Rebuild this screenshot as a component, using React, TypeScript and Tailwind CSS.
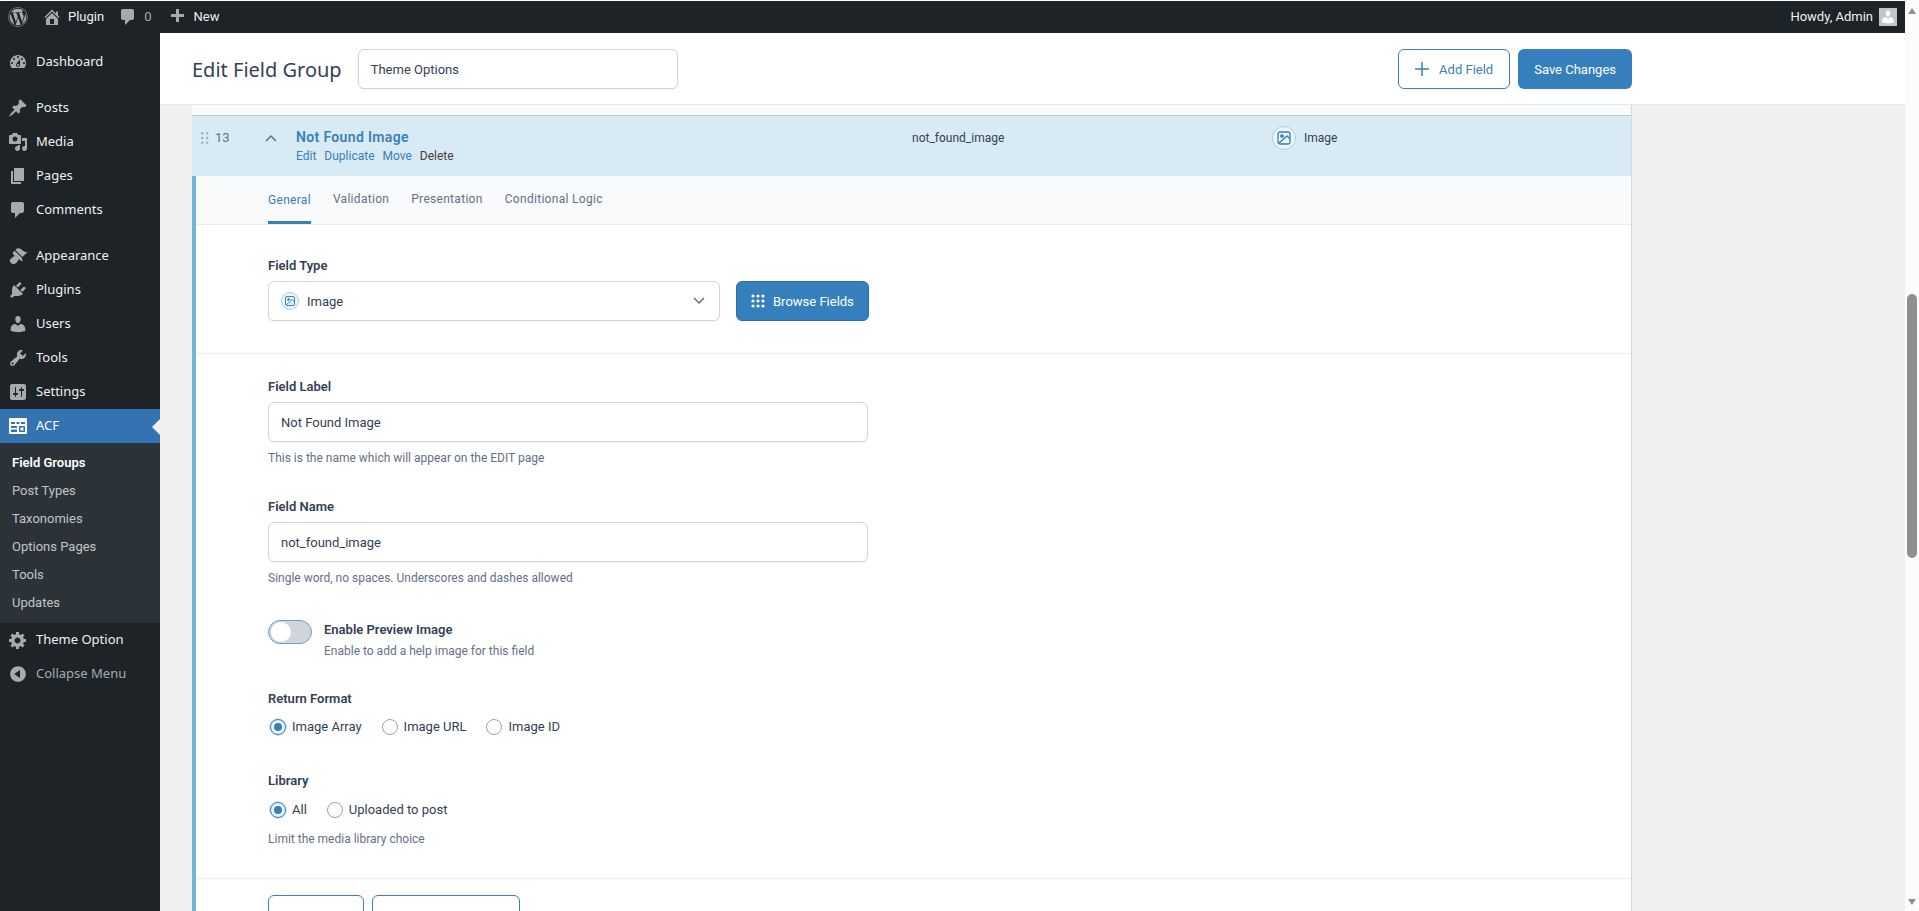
import { FaWordpress } from "react-icons/fa";

const P: Record<string, string> = {
  dashboard: "M3.76 16h12.48c1.1-1.37 1.76-3.11 1.76-5 0-4.42-3.58-8-8-8s-8 3.58-8 8c0 1.89.66 3.63 1.76 5zM10 4c.55 0 1 .45 1 1s-.45 1-1 1-1-.45-1-1 .45-1 1-1zM6 6c.55 0 1 .45 1 1s-.45 1-1 1-1-.45-1-1 .45-1 1-1zm8 0c.55 0 1 .45 1 1s-.45 1-1 1-1-.45-1-1 .45-1 1-1zm-5.37 5.55L12 7v6c0 1.1-.9 2-2 2s-2-.9-2-2c0-.57.24-1.08.63-1.45zM4 10c.55 0 1 .45 1 1s-.45 1-1 1-1-.45-1-1 .45-1 1-1zm12 0c.55 0 1 .45 1 1s-.45 1-1 1-1-.45-1-1 .45-1 1-1zm-5 3c0-.55-.45-1-1-1s-1 .45-1 1 .45 1 1 1 1-.45 1-1z",
  post: "M10.44 3.02l1.82-1.82 6.36 6.35-1.83 1.82c-1.05-.68-2.48-.57-3.41.36l-.75.75c-.92.93-1.04 2.35-.35 3.41l-1.83 1.82-2.41-2.41-2.8 2.79c-.42.42-3.38 2.71-3.8 2.29s1.86-3.39 2.28-3.81l2.79-2.79L4.1 9.36l1.83-1.82c1.05.69 2.48.57 3.4-.36l.75-.75c.93-.92 1.05-2.35.36-3.41z",
  media: "M13 11V4c0-.55-.45-1-1-1h-1.67L9 1H5L3.67 3H2c-.55 0-1 .45-1 1v7c0 .55.45 1 1 1h10c.55 0 1-.45 1-1zM7 4.5c1.38 0 2.5 1.12 2.5 2.5S8.38 9.5 7 9.5 4.5 8.38 4.5 7 5.62 4.5 7 4.5zM14 6h5v10.5c0 1.38-1.12 2.5-2.5 2.5S14 17.88 14 16.5s1.12-2.5 2.5-2.5c.17 0 .34.02.5.05V9h-3V6zm-4 8.05V13h2v3.5c0 1.38-1.12 2.5-2.5 2.5S7 17.88 7 16.5 8.12 14 9.5 14c.17 0 .34.02.5.05z",
  page: "M6 15V2h10v13H6zm-1 1h8v2H3V5h2v11z",
  comment: "M5 2h9c1.1 0 2 .9 2 2v7c0 1.1-.9 2-2 2h-2l-5 5v-5H5c-1.1 0-2-.9-2-2V4c0-1.1.9-2 2-2z",
  appearance: "M14.48 11.06L7.41 3.99l1.5-1.5c.5-.56 2.3-.47 3.51.32 1.21.8 1.43 1.28 2.91 2.1 1.18.64 2.45 1.26 4.45.85zm-.71.71L6.7 4.7 4.93 6.47c-.39.39-.39 1.02 0 1.41l1.06 1.06c.39.39.39 1.03 0 1.42-.6.6-1.43 1.11-2.21 1.69-.35.26-.7.53-1.01.84C1.43 13.23 1.43 15.66 2.9 17.1s3.88 1.44 5.35-.02c.31-.31.58-.66.84-1.01.58-.78 1.09-1.61 1.69-2.21.39-.39 1.02-.39 1.41 0l1.06 1.06c.39.39 1.02.39 1.41 0z",
  plugin: "M13.11 4.36L9.87 7.6 8 5.73l3.24-3.24c.35-.34 1.05-.2 1.56.32.52.51.66 1.21.31 1.55zm-8 1.77l.91-1.12 9.01 9.01-1.19.84c-.71.71-2.63 1.16-3.82 1.16H6.14L4.9 17.26c-.59.59-1.54.59-2.12 0-.59-.58-.59-1.53 0-2.12l1.24-1.24v-3.88c0-1.13.4-3.19 1.09-3.89zm7.26 3.97l3.24-3.24c.34-.35 1.04-.21 1.55.31.52.51.66 1.21.31 1.55l-3.24 3.25z",
  users: "M10 9.25c-2.27 0-2.73-3.44-2.73-3.44C7 4.02 7.82 2 9.97 2c2.16 0 2.98 2.02 2.71 3.81 0 0-.41 3.44-2.68 3.44zm0 2.57L12.72 10c2.39 0 4.52 2.33 4.52 4.53v2.49s-3.65 1.13-7.24 1.13c-3.65 0-7.24-1.13-7.24-1.13v-2.49c0-2.25 1.94-4.48 4.47-4.48z",
  tools: "M16.68 9.77c-1.34 1.34-3.3 1.67-4.95.99l-5.41 6.52c-.99.99-2.59.99-3.58 0s-.99-2.59 0-3.57l6.52-5.42c-.68-1.65-.35-3.61.99-4.95 1.28-1.28 3.12-1.62 4.72-1.06l-2.89 2.89 2.82 2.82 2.86-2.87c.53 1.58.18 3.39-1.08 4.65zM3.81 16.21c.4.39 1.04.39 1.43 0 .4-.4.4-1.04 0-1.43-.39-.4-1.03-.4-1.43 0-.39.39-.39 1.03 0 1.43z",
  settings: "M18 16V4c0-1.1-.9-2-2-2H4c-1.1 0-2 .9-2 2v12c0 1.1.9 2 2 2h12c1.1 0 2-.9 2-2zM8 11h1c.55 0 1 .45 1 1s-.45 1-1 1H8v1.5c0 .28-.22.5-.5.5s-.5-.22-.5-.5V13H6c-.55 0-1-.45-1-1s.45-1 1-1h1V5.5c0-.28.22-.5.5-.5s.5.22.5.5V11zm5-2h-1c-.55 0-1-.45-1-1s.45-1 1-1h1V5.5c0-.28.22-.5.5-.5s.5.22.5.5V7h1c.55 0 1 .45 1 1s-.45 1-1 1h-1v5.5c0 .28-.22.5-.5.5s-.5-.22-.5-.5V9z",
  gear: "M18 12h-2.18c-.17.7-.44 1.35-.81 1.93l1.54 1.54-2.1 2.1-1.54-1.54c-.58.36-1.23.63-1.91.79V19H8v-2.18c-.68-.16-1.33-.43-1.91-.79l-1.54 1.54-2.12-2.12 1.54-1.54c-.36-.58-.63-1.23-.79-1.91H1V9.03h2.17c.16-.7.44-1.35.8-1.94L2.43 5.55l2.1-2.1 1.54 1.54c.58-.37 1.24-.64 1.93-.81V2h3v2.18c.68.16 1.33.43 1.91.79l1.54-1.54 2.12 2.12-1.54 1.54c.36.59.64 1.24.8 1.94H18V12zm-8.5 1.5c1.66 0 3-1.34 3-3s-1.34-3-3-3-3 1.34-3 3 1.34 3 3 3z",
  collapse: "M10 2.16c4.33 0 7.84 3.51 7.84 7.84s-3.51 7.84-7.84 7.84S2.16 14.33 2.16 10 5.71 2.16 10 2.16zm2 11.72V6.12L6.18 9.97z",
  home: "M16 8.5l1.53 1.53-1.06 1.06L10 4.62l-6.47 6.47-1.06-1.06L10 2.5l4 4v-2h2v4zm-6-2.46l6 5.99V18H4v-5.97zM12 17v-5H8v5h4z",
  plus: "M17 7v3h-5v5H9v-5H4V7h5V2h3v5h5z",
};

function Dash({ name, className }: { name: string; className: string }) {
  return (
    <svg viewBox="0 0 20 20" fill="currentColor" className={className}>
      <path d={P[name]} />
    </svg>
  );
}

function AcfIcon() {
  return (
    <svg viewBox="0 0 18 16" className="h-4 w-4.5">
      <path
        fillRule="evenodd"
        fill="#fff"
        d="M1 0h16a1 1 0 0 1 1 1v14a1 1 0 0 1-1 1H1a1 1 0 0 1-1-1V1a1 1 0 0 1 1-1zM2 4v2h4V4H2zm5.5 0v2h3V4h-3zM12 4v2h4V4h-4zM2 8v2h6V8H2zm0 3.5V14h6v-2.5H2zM10 8v6h6V8h-6zm1.5 1.5h3v3h-3v-3z"
      />
    </svg>
  );
}

function MenuItem({ icon, label, dim }: { icon: string; label: string; dim?: boolean }) {
  return (
    <div className={`flex h-8.5 items-center font-['Noto_Sans',sans-serif] ${dim ? "text-[#a7aaad]" : "text-[#f0f0f1]"}`}>
      <span className="flex w-9 justify-center">
        <Dash name={icon} className="size-5 text-[#a7aaad]" />
      </span>
      <span>{label}</span>
    </div>
  );
}

function ImageGlyph({ className }: { className: string }) {
  return (
    <svg viewBox="0 0 16 16" fill="none" stroke="currentColor" strokeWidth="1.3" className={className}>
      <rect x="2" y="2" width="12" height="12" rx="2" />
      <circle cx="6" cy="6" r="1.2" fill="currentColor" />
      <path d="M3 13l8-7 3 3" />
    </svg>
  );
}

function Badge() {
  return (
    <span className="flex size-6 shrink-0 items-center justify-center rounded-full border border-[#a5d2e7] bg-[#ebf5fa] text-[#3a7fb5]">
      <ImageGlyph className="size-4" />
    </span>
  );
}

function Radio({ label, checked }: { label: string; checked?: boolean }) {
  return (
    <span className="flex items-center gap-1.5 text-[#344054]">
      {checked ? (
        <span className="ml-0.5 flex size-4 items-center justify-center rounded-full border border-[#3a7fb5] bg-[#ebf5fa] ring-1 ring-[#cfe4f1]">
          <span className="size-2 rounded-full bg-[#3580bc]" />
        </span>
      ) : (
        <span className="size-4 rounded-full border border-[#98a2b3] bg-white" />
      )}
      {label}
    </span>
  );
}

function Label({ children }: { children: string }) {
  return <div className="font-semibold leading-4.5 text-[#344054]">{children}</div>;
}

function Help({ children }: { children: string }) {
  return <div className="mt-2 text-xs leading-4 text-[#667085]">{children}</div>;
}

function TextInput({ value }: { value: string }) {
  return (
    <div className="mt-1.5 flex h-10 w-150 items-center rounded-md border border-[#d0d5dd] bg-white px-3 pt-0.5 text-[#344054] shadow-xs">
      {value}
    </div>
  );
}

const tabs = ["Validation", "Presentation", "Conditional Logic"];

export default function App() {
  return (
    <div className="flex h-screen w-full overflow-hidden bg-white font-['Roboto',sans-serif] text-[13px]">
      <div className="flex min-w-0 flex-1 flex-col pt-px">
        <header className="flex h-8 shrink-0 items-center justify-between bg-[#1d2327] pl-2 pr-2 text-[#f0f0f1]">
          <div className="flex items-center">
            <FaWordpress className="size-5 text-[#a7aaad]" />
            <span className="ml-3.5 flex items-center gap-1.5">
              <Dash name="home" className="size-5 text-[#a7aaad]" />
              Plugin
            </span>
            <span className="ml-3.5 flex items-center gap-1.5 text-[#a7aaad]">
              <Dash name="comment" className="size-5" />0
            </span>
            <span className="ml-4 flex items-center gap-1.5">
              <Dash name="plus" className="size-5 text-[#a7aaad]" />
              New
            </span>
          </div>
          <div className="flex items-center gap-1.5">
            <span>Howdy, Admin</span>
            <span className="flex size-4.5 items-end justify-center overflow-hidden border border-[#c3c4c7] bg-[#c3c4c7]">
              <Dash name="users" className="size-4 text-white" />
            </span>
          </div>
        </header>

        <div className="flex min-h-0 flex-1">
          <aside className="w-40 shrink-0 bg-[#1d2327] pt-3">
            <MenuItem icon="dashboard" label="Dashboard" />
            <div className="mt-3">
              <MenuItem icon="post" label="Posts" />
              <MenuItem icon="media" label="Media" />
              <MenuItem icon="page" label="Pages" />
              <MenuItem icon="comment" label="Comments" />
            </div>
            <div className="mt-3">
              <MenuItem icon="appearance" label="Appearance" />
              <MenuItem icon="plugin" label="Plugins" />
              <MenuItem icon="users" label="Users" />
              <MenuItem icon="tools" label="Tools" />
              <MenuItem icon="settings" label="Settings" />
            </div>
            <div className="relative flex h-8.5 items-center bg-[#3373b1] font-['Noto_Sans',sans-serif] text-white">
              <span className="flex w-9 justify-center">
                <AcfIcon />
              </span>
              ACF
              <span className="absolute right-0 top-2.5 border-y-8 border-r-8 border-y-transparent border-r-[#f0f0f1]" />
            </div>
            <div className="bg-[#2c3338] py-1.5 text-[#c3c4c7]">
              <div className="flex h-7 items-center pl-3 font-semibold text-white">Field Groups</div>
              {["Post Types", "Taxonomies", "Options Pages", "Tools", "Updates"].map((s) => (
                <div key={s} className="flex h-7 items-center pl-3">
                  {s}
                </div>
              ))}
            </div>
            <MenuItem icon="gear" label="Theme Option" />
            <MenuItem icon="collapse" label="Collapse Menu" dim />
          </aside>

          <main className="flex min-w-0 flex-1 flex-col bg-[#f0f0f1]">
            <div className="flex h-18 shrink-0 border-b border-[#e4e7ec] bg-white pl-8">
              <div className="flex w-360 items-center justify-between">
                <div className="flex items-center gap-4">
                  <h1 className="pt-0.5 font-['Noto_Sans',sans-serif] text-xl text-[#344054]">Edit Field Group</h1>
                  <div className="flex h-10 w-80 items-center rounded-md border border-[#d0d5dd] bg-white px-3 pt-0.5 text-[#344054] shadow-xs">
                    Theme Options
                  </div>
                </div>
                <div className="flex gap-2">
                  <div className="flex h-10 items-center gap-2.5 rounded-md border border-[#3a7fb5] bg-white px-4 text-[#3a7fb5]">
                    <svg viewBox="0 0 14 14" stroke="currentColor" strokeWidth="1.5" className="size-3.5">
                      <path d="M7 0v14M0 7h14" />
                    </svg>
                    <span className="pt-0.5">Add Field</span>
                  </div>
                  <div className="flex h-10 items-center rounded-md bg-[#3580bc] px-4 pt-0.5 text-white">Save Changes</div>
                </div>
              </div>
            </div>

            <div className="ml-8 flex min-h-0 w-360 flex-1 flex-col overflow-hidden border-r border-[#d5d9dd] bg-white">
              <div className="h-2.5 shrink-0 bg-[#f9fafb]" />
              <div className="box-content flex h-15 shrink-0 items-start border-t border-[#a9cfe0] bg-[#d8ebf5] pl-2 text-[#344054]">
                <div className="flex w-16 items-center gap-1.5 pt-3 leading-5">
                  <svg viewBox="0 0 8 12" fill="#a3adb8" className="ml-px h-3 w-2">
                    <circle cx="1.2" cy="1.2" r="1.2" />
                    <circle cx="6.2" cy="1.2" r="1.2" />
                    <circle cx="1.2" cy="6" r="1.2" />
                    <circle cx="6.2" cy="6" r="1.2" />
                    <circle cx="1.2" cy="10.8" r="1.2" />
                    <circle cx="6.2" cy="10.8" r="1.2" />
                  </svg>
                  <span className="text-[#667085]">13</span>
                </div>
                <div className="w-8 pt-4.5">
                  <svg viewBox="0 0 12 8" fill="none" stroke="#667085" strokeWidth="1.5" className="ml-px h-2 w-3">
                    <path d="M1 7l5-5 5 5" />
                  </svg>
                </div>
                <div className="w-154 pt-3">
                  <div className="text-sm font-semibold leading-4.5 tracking-wide text-[#3a7fb5]">Not Found Image</div>
                  <div className="mt-0.5 flex gap-2 text-xs leading-4 text-[#3a7fb5]">
                    <span>Edit</span>
                    <span>Duplicate</span>
                    <span>Move</span>
                    <span className="text-[#4a3b36]">Delete</span>
                  </div>
                </div>
                <div className="w-90 pt-3 text-xs leading-5">not_found_image</div>
                <div className="mt-2.5 flex items-center gap-2 text-xs">
                  <Badge />
                  Image
                </div>
              </div>

              <div className="flex shrink-0 border-l-4 border-[#72b4d9]">
                <div className="min-w-0 flex-1">
                  <div className="box-content flex h-12 gap-5.5 border-b border-[#eaecf0] bg-[#f9fafb] pl-18 text-xs tracking-wide text-[#667085]">
                    <span className="flex items-center border-b-3 border-[#3a7fb5] pt-0.5 text-[#3a7fb5]">General</span>
                    {tabs.map((t) => (
                      <span key={t} className="flex items-center pb-0.5">
                        {t}
                      </span>
                    ))}
                  </div>

                  <div className="border-b border-[#eaecf0] px-18 pb-8 pt-8">
                    <Label>Field Type</Label>
                    <div className="mt-1.5 flex gap-4">
                      <div className="flex h-10 w-113 items-center gap-2 rounded-md border border-[#d0d5dd] bg-white pl-3 pr-3.5 text-[#344054] shadow-xs">
                        <span className="flex size-4.5 items-center justify-center rounded-full border border-[#a5d2e7] bg-[#ebf5fa] text-[#3a7fb5]">
                          <ImageGlyph className="size-3" />
                        </span>
                        <span className="flex-1 pt-0.5">Image</span>
                        <svg viewBox="0 0 12 8" fill="none" stroke="#667085" strokeWidth="1.5" className="h-2 w-3">
                          <path d="M1 1l5 5 5-5" />
                        </svg>
                      </div>
                      <div className="flex h-10 items-center gap-2 rounded-md border border-[#2d6fa5] bg-[#3580bc] px-3.5 text-white">
                        <svg viewBox="0 0 14 14" fill="currentColor" className="size-3.5">
                          {[2, 7, 12].flatMap((x) =>
                            [2, 7, 12].map((y) => <circle key={`${x}-${y}`} cx={x} cy={y} r="1.6" />),
                          )}
                        </svg>
                        <span className="pt-0.5">Browse Fields</span>
                      </div>
                    </div>
                  </div>

                  <div className="border-b border-[#eaecf0] px-18 pb-7.5 pt-6">
                    <Label>Field Label</Label>
                    <TextInput value="Not Found Image" />
                    <Help>This is the name which will appear on the EDIT page</Help>

                    <div className="mt-8">
                      <Label>Field Name</Label>
                    </div>
                    <TextInput value="not_found_image" />
                    <Help>Single word, no spaces. Underscores and dashes allowed</Help>

                    <div className="mt-8.5 flex gap-3">
                      <div className="flex h-6 w-11 items-center rounded-full border border-[#6f9fc6] bg-[#d0d5dd] px-0.5">
                        <span className="size-5 rounded-full bg-white" />
                      </div>
                      <div className="pt-px">
                        <Label>Enable Preview Image</Label>
                        <div className="mt-0.75 text-xs leading-4.5 text-[#667085]">Enable to add a help image for this field</div>
                      </div>
                    </div>

                    <div className="mt-7.5">
                      <Label>Return Format</Label>
                    </div>
                    <div className="mt-2.5 flex gap-5 leading-4.5">
                      <Radio label="Image Array" checked />
                      <Radio label="Image URL" />
                      <Radio label="Image ID" />
                    </div>

                    <div className="mt-9">
                      <Label>Library</Label>
                    </div>
                    <div className="mt-2.5 flex gap-5 leading-5">
                      <Radio label="All" checked />
                      <Radio label="Uploaded to post" />
                    </div>
                    <div className="mt-2.5 text-xs leading-4.5 text-[#667085]">Limit the media library choice</div>
                  </div>

                  <div className="flex gap-2 px-18 pt-4">
                    <div className="h-10 w-24 rounded-md border border-[#3a7fb5] bg-white" />
                    <div className="h-10 w-37 rounded-md border border-[#3a7fb5] bg-white" />
                  </div>
                </div>
              </div>
            </div>
          </main>
        </div>
      </div>

      <div className="flex w-3.5 shrink-0 flex-col items-center bg-[#fcfcfc] pt-2">
        <svg viewBox="0 0 8 6" fill="#8f8f8f" className="h-1.5 w-2">
          <path d="M4 0l4 6H0z" />
        </svg>
        <div className="mt-70 h-66 w-2.5 rounded-full bg-[#8f8f8f]" />
        <svg viewBox="0 0 8 6" fill="#8f8f8f" className="mb-1.5 mt-auto h-1.5 w-2">
          <path d="M4 6L0 0h8z" />
        </svg>
      </div>
    </div>
  );
}
